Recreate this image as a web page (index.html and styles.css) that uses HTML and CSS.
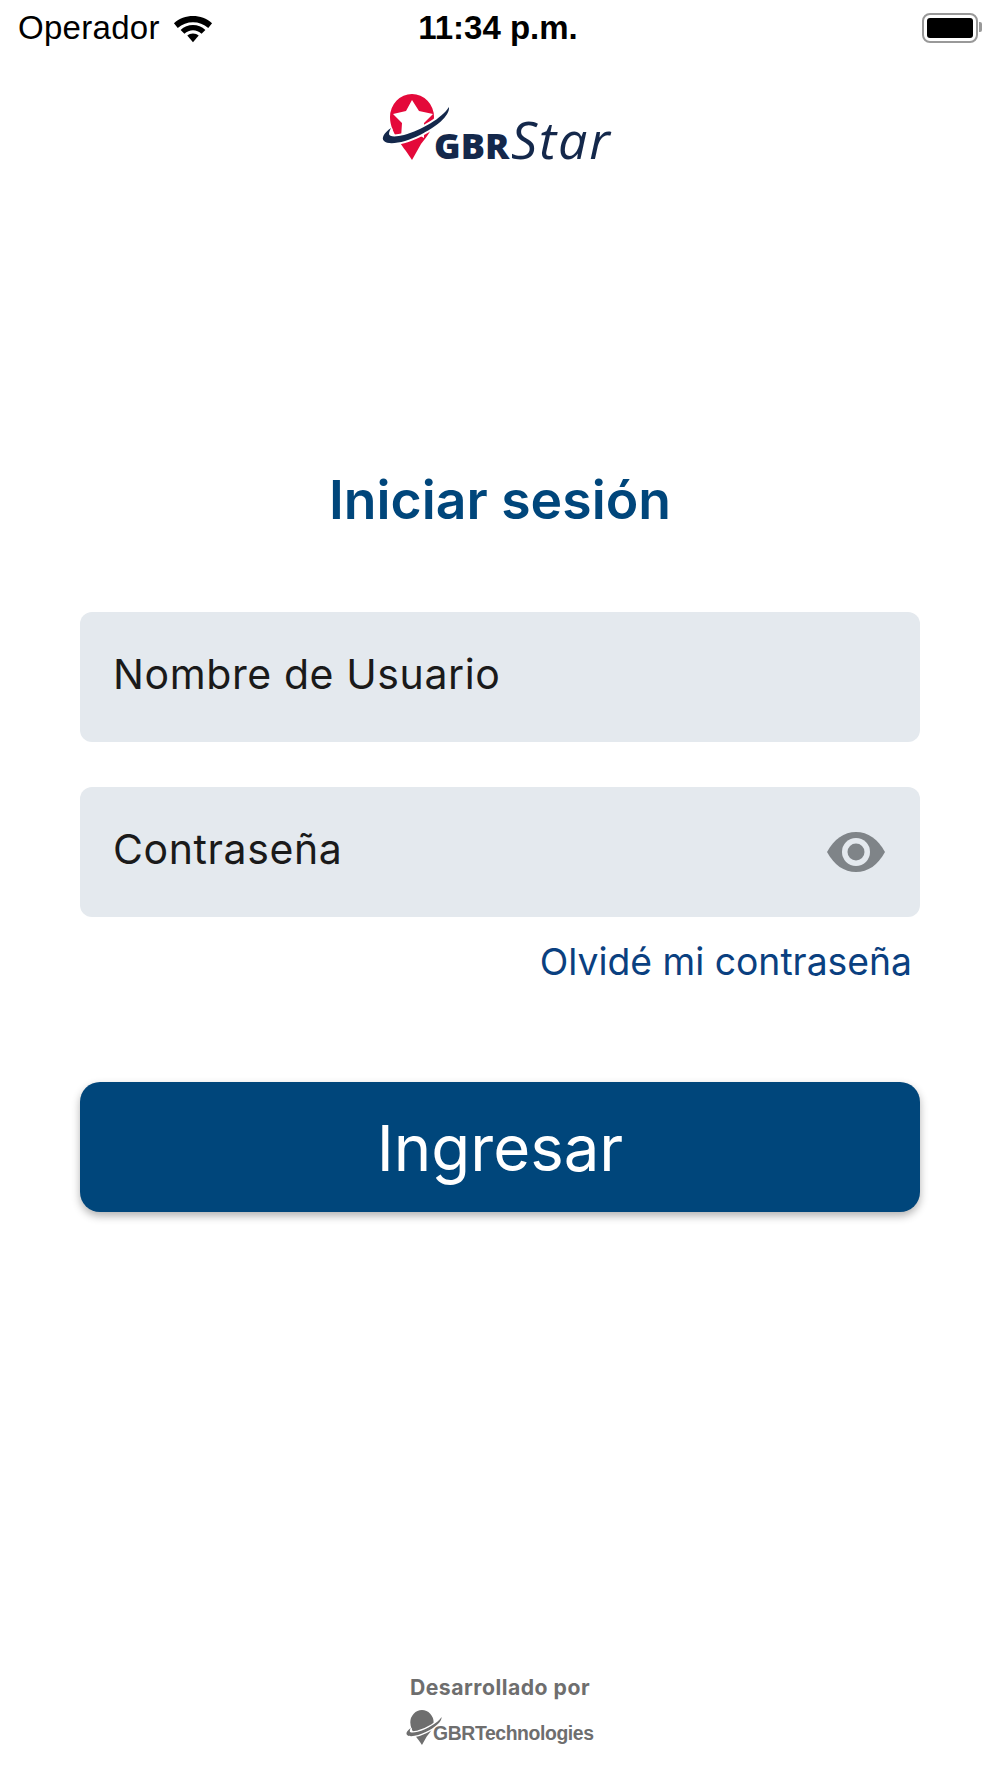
FILE: index.html
```html
<!DOCTYPE html>
<html>
<head>
  <title>GBR Star</title>
  <link rel="stylesheet" href="styles.css">
</head>
<body>
<div class="status-bar">
  <div class="status-left">
    <span class="carrier">Operador</span>
    <svg class="wifi" width="40" height="30" viewBox="0 0 42 30">
      <path d="M1 10 C12 0 30 0 41 10 L37 15 C28 7 14 7 5 15 Z" fill="#000"/>
      <path d="M8 17 C15 10 27 10 34 17 L30 21 C25 16 17 16 12 21 Z" fill="#000"/>
      <path d="M15 23 C18 20 24 20 27 23 L21 30 Z" fill="#000"/>
    </svg>
  </div>
  <span class="clock">11:34 p.m.</span>
  <div class="battery"><div class="battery-level"></div></div>
</div>

<div class="logo">
  <svg width="240" height="86" viewBox="0 0 240 86">
    <path d="M32 68 C25 56 10 42 10 25 A22 23 0 0 1 54 25 C54 36 46 46 41 52 Z" fill="#e4093a"/>
    <polygon points="32,8 39,19 53,22 44,31 44,46 32,39 21,46 22,31 13,22 26,19" fill="#fff"/>
    <path d="M11 36 C4 41 1 46 4 49 C9 54 26 50 40 43 C56 35 70 24 69 15 C62 26 42 38 24 43 C16 45 9 45 9 42 C9 40 10 38 11 36 Z" fill="#fff" stroke="#fff" stroke-width="4"/>
    <path d="M11 36 C4 41 1 46 4 49 C9 54 26 50 40 43 C56 35 70 24 69 15 C62 26 42 38 24 43 C16 45 9 45 9 42 C9 40 10 38 11 36 Z" fill="#14284b"/>
    <text x="54" y="67" class="logo-gbr">GBR</text>
    <text x="131" y="67" class="logo-star">Star</text>
  </svg>
</div>

<main class="login">
  <h1 class="title">Iniciar sesión</h1>
  <div class="field"><span class="field-text">Nombre de Usuario</span></div>
  <div class="field field-password">
    <span class="field-text">Contraseña</span>
    <svg width="60" height="42" viewBox="0 0 60 42">
      <path d="M1 21 C8 8 18 1 30 1 C42 1 52 8 59 21 C52 34 42 41 30 41 C18 41 8 34 1 21 Z" fill="#7f8488"/>
      <circle cx="30" cy="21" r="14" fill="#e4e9ee"/>
      <circle cx="30" cy="21" r="8.5" fill="#7f8488"/>
    </svg>
  </div>
  <a class="forgot">Olvidé mi contraseña</a>
  <button class="btn-login">Ingresar</button>
</main>

<footer class="footer">
  <div class="dev-label">Desarrollado por</div>
  <svg width="190" height="38" viewBox="0 0 190 38">
    <g transform="translate(0 1) scale(0.53)">
      <path d="M32 68 C25 56 10 42 10 25 A22 23 0 0 1 54 25 C54 36 46 46 41 52 Z" fill="#6e6e6e"/>
      <path d="M11 36 C4 41 1 46 4 49 C9 54 26 50 40 43 C56 35 70 24 69 15 C62 26 42 38 24 43 C16 45 9 45 9 42 C9 40 10 38 11 36 Z" fill="#fff" stroke="#fff" stroke-width="5"/>
      <path d="M11 36 C4 41 1 46 4 49 C9 54 26 50 40 43 C56 35 70 24 69 15 C62 26 42 38 24 43 C16 45 9 45 9 42 C9 40 10 38 11 36 Z" fill="#6e6e6e"/>
    </g>
    <text x="28" y="32" class="tech-text">GBRTechnologies</text>
  </svg>
</footer>
</body>
</html>
```

FILE: styles.css
```css
body {
  margin: 0;
  height: 1778px;
  background-color: #fff;
  font-family: Inter, sans-serif;
  display: flex;
  flex-direction: column;
  overflow: hidden;
}

.status-bar {
  height: 56px;
  padding: 0 22px 0 18px;
  display: grid;
  grid-template-columns: 1fr auto 1fr;
  align-items: center;
  color: #000;
}

.status-left {
  display: flex;
  align-items: center;
  gap: 13px;
}

.carrier {
  font-family: "Liberation Sans", sans-serif;
  font-size: 33px;
  letter-spacing: 0.3px;
}

.clock {
  font-family: "Liberation Sans", sans-serif;
  font-size: 33px;
  font-weight: 700;
}

.battery {
  justify-self: end;
  width: 56px;
  height: 30px;
  padding: 3px;
  box-sizing: border-box;
  border: 2px solid #999;
  border-radius: 8px;
  position: relative;
}

.battery::after {
  content: "";
  position: absolute;
  right: -6px;
  top: 7px;
  width: 3px;
  height: 10px;
  background-color: #999;
  border-radius: 0 2px 2px 0;
}

.battery-level {
  height: 100%;
  background-color: #000;
  border-radius: 3px;
}

.logo {
  margin-top: 36px;
  padding-left: 380px;
  height: 86px;
}

.logo-gbr {
  font-family: "Open Sans", sans-serif;
  font-weight: 800;
  font-size: 36px;
  fill: #14284b;
}

.logo-star {
  font-family: "Open Sans", sans-serif;
  font-style: italic;
  font-size: 52px;
  letter-spacing: 1.8px;
  fill: #14284b;
}

.login {
  padding: 0 80px;
  display: flex;
  flex-direction: column;
}

.title {
  margin: 291px 0 81px;
  text-align: center;
  font-size: 53.5px;
  line-height: 62px;
  font-weight: 600;
  color: #00467b;
}

.field {
  height: 130px;
  margin-bottom: 45px;
  padding: 0 34px 0 33px;
  background-color: #e4e9ee;
  border-radius: 12px;
  font-size: 41px;
  letter-spacing: 0.6px;
  color: #1a1a1a;
  display: flex;
  align-items: center;
}

.field-text {
  padding-bottom: 6px;
}

.field-password {
  margin-bottom: 0;
  justify-content: space-between;
}

.forgot {
  margin: 24px 8px 0 0;
  text-align: right;
  font-size: 37.3px;
  line-height: 42px;
  color: #0a4080;
}

.btn-login {
  margin-top: 99px;
  height: 130px;
  border: none;
  border-radius: 20px;
  background-color: #00467b;
  color: #fff;
  font-family: Inter, sans-serif;
  font-size: 63.5px;
  box-shadow: 0 4px 8px rgba(0, 0, 0, 0.3);
}

.footer {
  margin-top: auto;
  padding-bottom: 32px;
  display: flex;
  flex-direction: column;
  align-items: center;
  gap: 8px;
}

.dev-label {
  font-size: 21.2px;
  font-weight: 700;
  letter-spacing: 0.5px;
  color: #6e6e6e;
}

.tech-text {
  font-family: "Liberation Sans", sans-serif;
  font-weight: 700;
  font-size: 19.4px;
  letter-spacing: -0.4px;
  fill: #6e6e6e;
}
```
